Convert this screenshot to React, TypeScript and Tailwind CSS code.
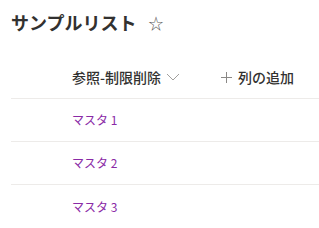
export default function App() {
  const rows = ["マスタ 1", "マスタ 2", "マスタ 3"];
  return (
    <div className="w-[319px] h-[228px] bg-white overflow-hidden font-['Segoe_UI','Noto_Sans_CJK_JP',sans-serif] text-[#323130]">
      <div className="flex items-center pl-[11px] pt-[8px] h-[36px]">
        <h1 className="text-[18px] font-semibold leading-none">サンプルリスト</h1>
        <span className="ml-[12px] text-[15px] text-[#605e5c] leading-none">☆</span>
      </div>
      <div className="ml-[11px] mt-[20px]">
        <div className="flex items-center h-[43px] border-b border-[#edebe9]">
          <div className="flex items-center pl-[61px] w-[210px]">
            <span className="text-[14px] font-medium">参照-制限削除</span>
            <svg className="ml-[5px]" width="14" height="8" viewBox="0 0 14 8" fill="none">
              <path d="M1 1l6 6 6-6" stroke="#a19f9d" strokeWidth="1" />
            </svg>
          </div>
          <div className="flex items-center">
            <svg width="11" height="11" viewBox="0 0 11 11" fill="none">
              <path d="M5.5 0v11M0 5.5h11" stroke="#8a8886" strokeWidth="1" />
            </svg>
            <span className="ml-[6px] text-[14px] font-medium">列の追加</span>
          </div>
        </div>
        {rows.map((r, i) => (
          <div
            key={r}
            className={`flex items-center h-[43px] pl-[61px] ${i < rows.length - 1 ? "border-b border-[#edebe9]" : ""}`}
          >
            <span className="text-[12px] text-[#8a2aa6]">{r}</span>
          </div>
        ))}
      </div>
    </div>
  );
}
